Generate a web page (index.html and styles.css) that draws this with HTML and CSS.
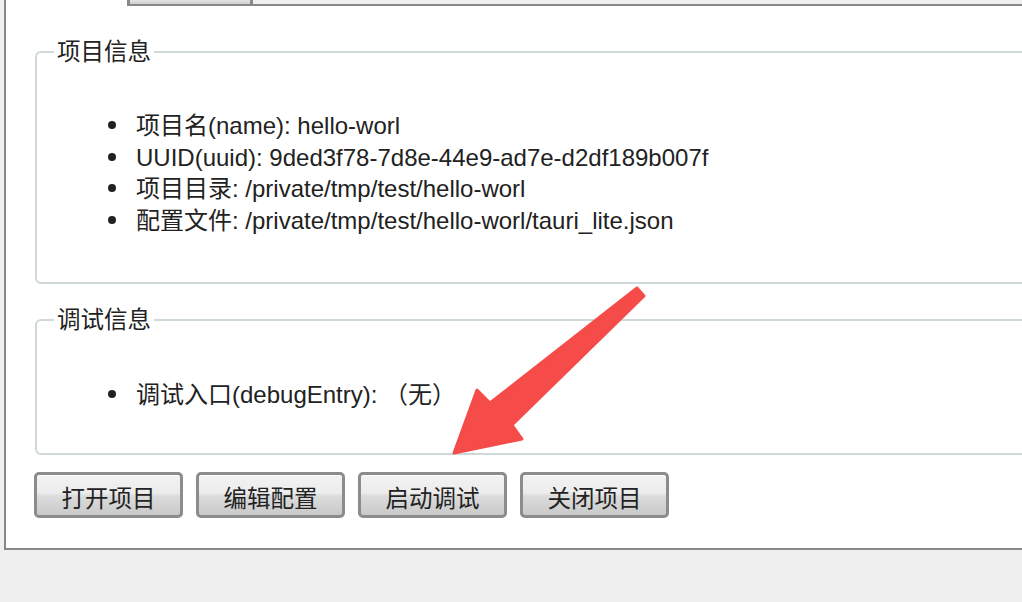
FILE: index.html
```html
<!DOCTYPE html>
<html lang="zh-CN">
<head>
<meta charset="utf-8">
<title>项目</title>
<link rel="stylesheet" href="styles.css">
</head>
<body>
<div class="tabbar">
  <div class="tab tab-active"></div>
  <div class="tab tab-other"></div>
</div>
<div class="panel">
  <fieldset class="group group-project">
    <legend>项目信息</legend>
    <ul class="info">
      <li>项目名(name): hello-worl</li>
      <li>UUID(uuid): 9ded3f78-7d8e-44e9-ad7e-d2df189b007f</li>
      <li>项目目录: /private/tmp/test/hello-worl</li>
      <li>配置文件: /private/tmp/test/hello-worl/tauri_lite.json</li>
    </ul>
  </fieldset>
  <fieldset class="group group-debug">
    <legend>调试信息</legend>
    <ul class="info">
      <li>调试入口(debugEntry): （无）</li>
    </ul>
  </fieldset>
  <div class="actions">
    <button class="btn">打开项目</button>
    <button class="btn">编辑配置</button>
    <button class="btn">启动调试</button>
    <button class="btn">关闭项目</button>
  </div>
</div>
<svg class="arrow" width="1022" height="602" viewBox="0 0 1022 602">
  <polygon points="637,288 490,403 477,390 454,453 522,439 512,425 644,296" fill="#f54b49" stroke="#f54b49" stroke-width="3" stroke-linejoin="round"/>
</svg>
</body>
</html>
```

FILE: styles.css
```css
html, body {
  margin: 0;
  padding: 0;
}
body {
  background: #efefef;
  width: 1022px;
  height: 602px;
  overflow: hidden;
  font-family: "Liberation Sans", "Noto Sans CJK SC", sans-serif;
  color: #222;
}
.tabbar {
  display: flex;
  align-items: flex-start;
  height: 4px;
  margin-left: 4px;
}
.tab {
  box-sizing: border-box;
}
.tab-active {
  width: 123px;
  height: 6px;
  background: #fff;
  border-left: 2px solid #888;
  z-index: 1;
}
.tab-other {
  width: 126px;
  height: 4px;
  border-left: 3px solid #888;
  border-right: 3px solid #888;
  background: linear-gradient(#e4e4e4, #cfcfcf);
}
.panel {
  box-sizing: border-box;
  margin-left: 4px;
  width: 1100px;
  height: 546px;
  background: #fff;
  border: 2px solid #888;
  border-right: none;
  padding: 0 0 0 29px;
}
.group {
  margin: 33px 0 0 0;
  padding: 0 0 0 17px;
  border: 2px solid #cfd8d9;
  border-radius: 6px;
  min-width: 0;
}
.group legend {
  padding: 0 3px;
  font-size: 23.5px;
  line-height: 26px;
}
.group-project {
  padding-bottom: 46px;
}
.group-debug {
  margin-top: 23px;
  padding-bottom: 42px;
}
.info {
  margin: 45px 0 0 0;
  padding: 0 0 0 54px;
  list-style: none;
  font-size: 24px;
  line-height: 31.5px;
}
.info li::before {
  content: "";
  display: inline-block;
  width: 8px;
  height: 8px;
  border-radius: 50%;
  background: #222;
  margin-right: 20px;
  vertical-align: 5px;
}
.group-debug .info {
  margin-top: 46px;
}
.actions {
  display: flex;
  gap: 13px;
  margin-top: 17px;
  margin-left: -1px;
}
.btn {
  box-sizing: border-box;
  width: 149px;
  height: 46px;
  border: 3px solid #8c8c8c;
  border-radius: 5px;
  background: linear-gradient(#f2f2f2 0%, #ececec 45%, #dcdcdc 52%, #c9c9c9 100%);
  box-shadow: inset 0 1px 0 #fff;
  font-family: "Liberation Sans", "Noto Sans CJK SC", sans-serif;
  font-size: 23.5px;
  color: #222;
  padding: 4px 0 0 0;
}
.arrow {
  position: absolute;
  left: 0;
  top: 0;
  pointer-events: none;
}
```
